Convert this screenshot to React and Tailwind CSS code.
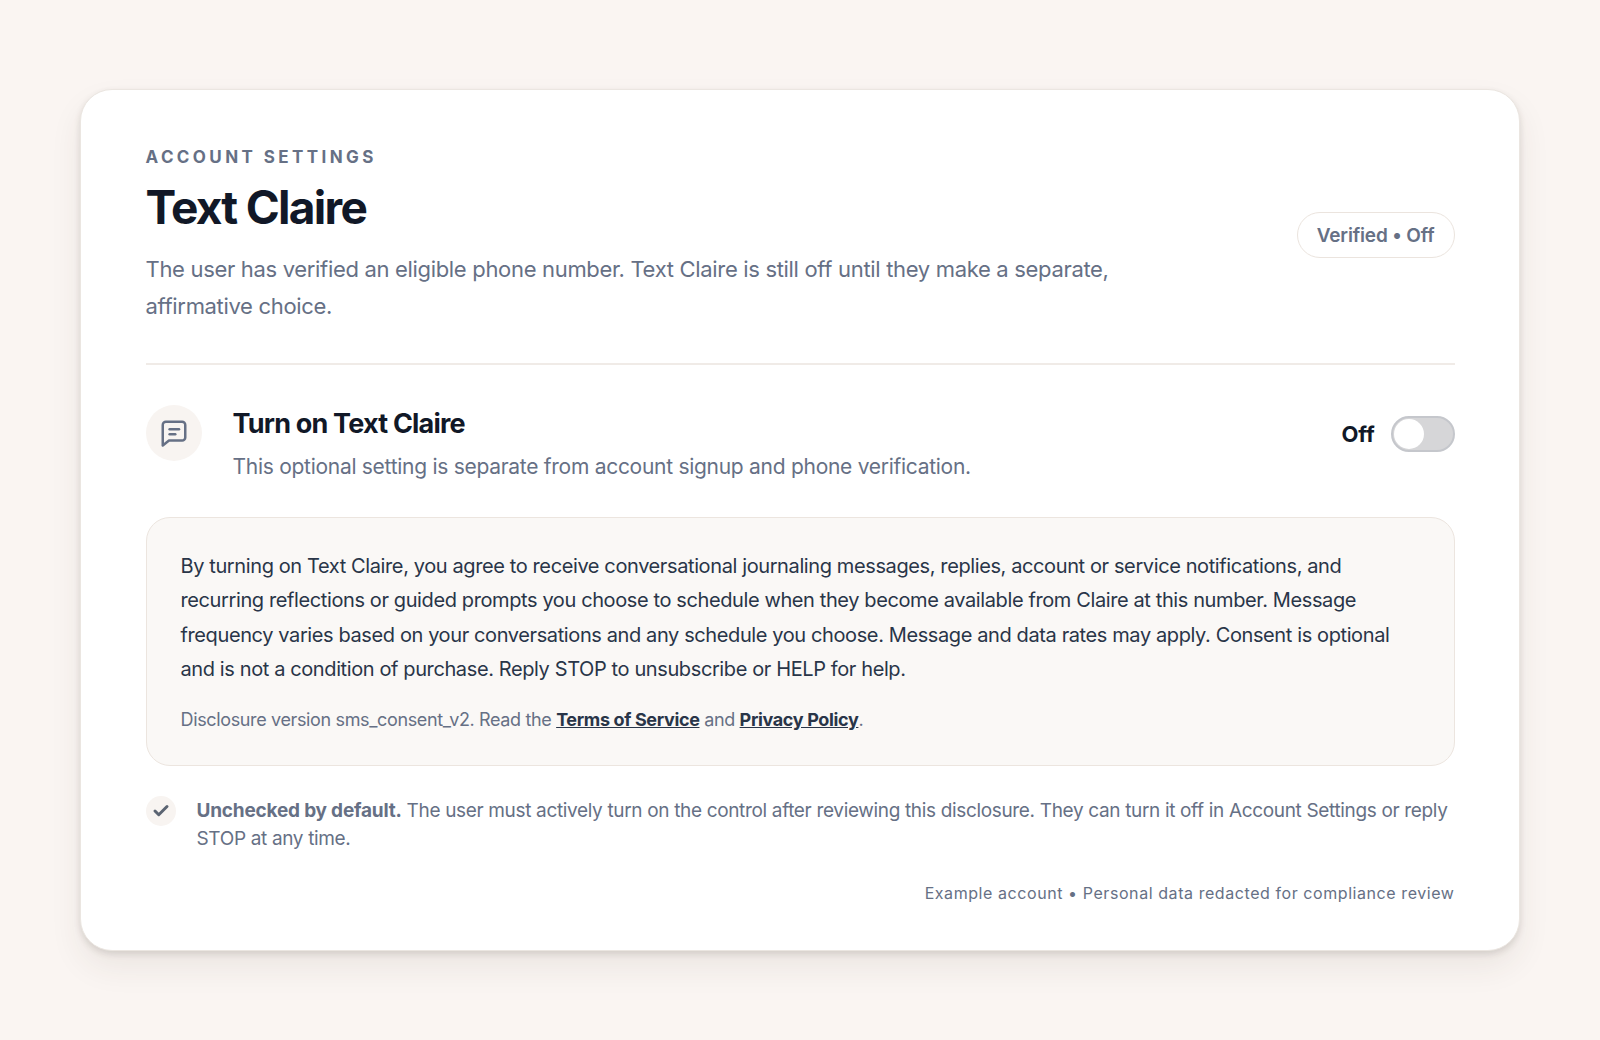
import { Check } from 'lucide-react';

function ChatIcon() {
  return (
    <svg width="30" height="30" viewBox="0 0 24 24" fill="none" stroke="currentColor" strokeWidth="2" strokeLinecap="round" strokeLinejoin="round">
      <path d="M21 5.5v10a2.5 2.5 0 0 1-2.5 2.5H8l-5 4V5.5A2.5 2.5 0 0 1 5.5 3h13A2.5 2.5 0 0 1 21 5.5z" />
      <path d="M8.5 9h7.5" />
      <path d="M8.5 13h4.5" />
    </svg>
  );
}

export default function App() {
  return (
    <div className="min-h-[1040px] bg-[#faf5f2] flex items-center justify-center font-['Inter',sans-serif]">
      <div className="w-[1440px] bg-white border border-[#ebe6e1] rounded-[32px] px-[64.5px] pt-[55px] pb-[45px] shadow-[0_3px_6px_rgba(60,50,40,0.14),0_16px_32px_rgba(60,50,40,0.08)]">
        {/* header */}
        <div className="flex items-center justify-between pb-[38px] border-b-2 border-[#f0ebe7]">
          <div className="w-[1000px]">
            <p className="text-[17px] leading-[24px] font-bold tracking-[0.2em] text-[#667085]">ACCOUNT SETTINGS</p>
            <h1 className="mt-[10px] text-[46px] leading-[56px] font-bold tracking-[-1.7px] text-[#111827]">Text Claire</h1>
            <p className="mt-[16px] text-[22px] leading-[37px] tracking-[-0.32px] text-[#667085]">
              The user has verified an eligible phone number. Text Claire is still off until they make a separate, affirmative choice.
            </p>
          </div>
          <span className="h-[46px] px-[19px] pt-[3px] flex items-center rounded-full border border-[#ebe4de] text-[19px] tracking-[-0.15px] font-semibold text-[#667085]">
            Verified • Off
          </span>
        </div>

        {/* toggle row */}
        <div className="flex items-start justify-between mt-[40px]">
          <div className="flex items-start gap-[31px]">
            <div className="w-[56px] h-[56px] rounded-full bg-[#f8f4f1] flex items-center justify-center text-[#667085]">
              <ChatIcon />
            </div>
            <div>
              <h2 className="mt-[1px] text-[27px] leading-[36px] font-bold tracking-[-0.8px] text-[#111827]">Turn on Text Claire</h2>
              <p className="mt-[9px] text-[21px] leading-[32px] tracking-[-0.28px] text-[#667085]">
                This optional setting is separate from account signup and phone verification.
              </p>
            </div>
          </div>
          <div className="flex items-center gap-[16px] mt-[11px]">
            <span className="text-[22px] font-bold tracking-[-0.2px] text-[#111827]">Off</span>
            <div className="w-[64px] h-[36px] rounded-full bg-[#d6d6d8] border-2 border-[#c5c7cc] flex items-center">
              <div className="w-[30px] h-[30px] rounded-full bg-white ml-[1px]" />
            </div>
          </div>
        </div>

        {/* disclosure */}
        <div className="mt-[34px] bg-[#faf8f6] border border-[#ece5df] rounded-[24px] px-[34px] pt-[31px] pb-[32px]">
          <p className="text-[20px] leading-[34.2px] tracking-[-0.39px] text-[#293548]">
            By turning on Text Claire, you agree to receive conversational journaling messages, replies, account or service notifications, and recurring reflections or guided prompts you choose to schedule when they become available from Claire at this number. Message frequency varies based on your conversations and any schedule you choose. Message and data rates may apply. Consent is optional and is not a condition of purchase. Reply STOP to unsubscribe or HELP for help.
          </p>
          <p className="mt-[21px] text-[18px] leading-[26px] tracking-[-0.36px] text-[#667085]">
            Disclosure version sms_consent_v2. Read the{' '}
            <a className="font-bold text-[#293548] underline">Terms of Service</a> and{' '}
            <a className="font-bold text-[#293548] underline">Privacy Policy</a>.
          </p>
        </div>

        {/* note */}
        <div className="flex items-start gap-[21px] mt-[30px]">
          <div className="w-[30px] h-[30px] shrink-0 rounded-full bg-[#f8f4f1] flex items-center justify-center text-[#5b6472]">
            <Check size={18} strokeWidth={4} />
          </div>
          <p className="mt-[1px] text-[19px] leading-[28.5px] tracking-[-0.34px] text-[#667085]">
            <strong className="font-bold tracking-[-0.2px]">Unchecked by default.</strong> The user must actively turn on the control after reviewing this disclosure. They can turn it off in Account Settings or reply STOP at any time.
          </p>
        </div>

        <p className="mt-[27px] text-right text-[16px] leading-[24px] tracking-[0.57px] text-[#667085]">
          Example account • Personal data redacted for compliance review
        </p>
      </div>
    </div>
  );
}
